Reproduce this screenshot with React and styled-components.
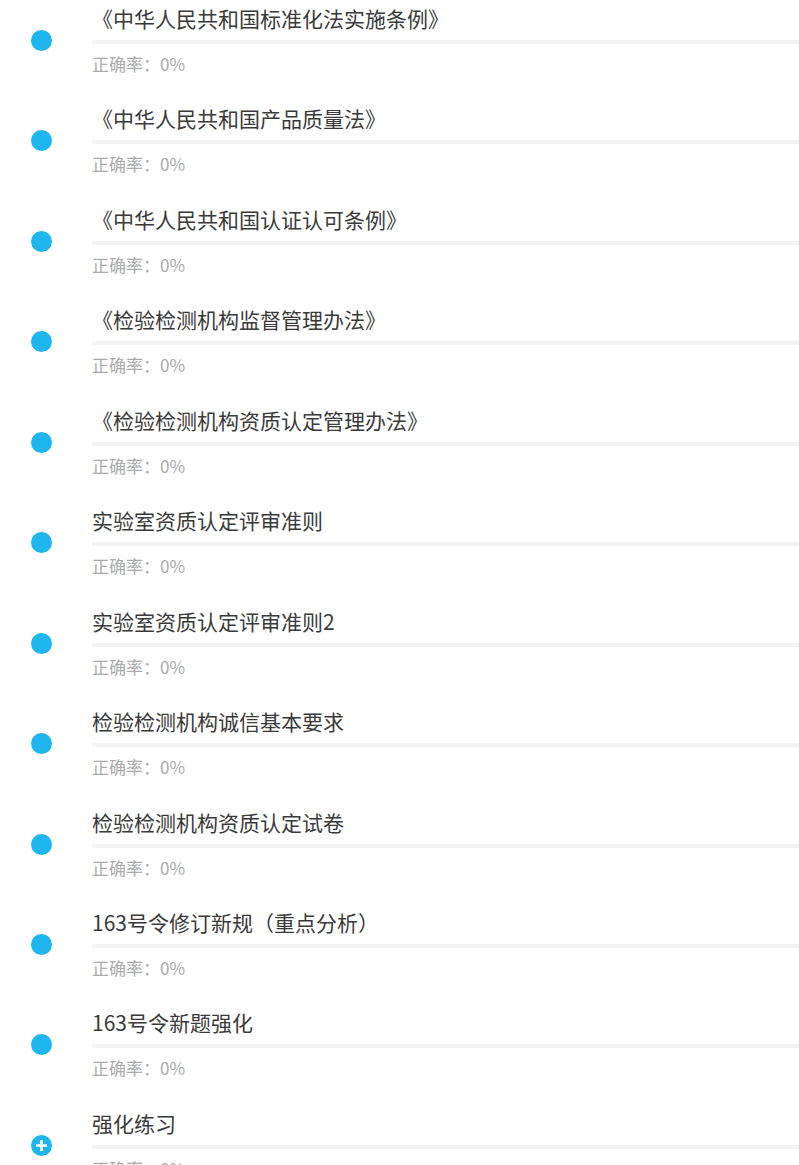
import React from 'react';
import styled, { createGlobalStyle } from 'styled-components';

const GlobalStyle = createGlobalStyle`
  html, body {
    margin: 0;
    padding: 0;
    background: #ffffff;
  }
  body {
    font-family: "Noto Sans CJK SC", "Noto Sans", sans-serif;
  }
`;

const chapters = [
  { title: '《中华人民共和国标准化法实施条例》', rate: '0%' },
  { title: '《中华人民共和国产品质量法》', rate: '0%' },
  { title: '《中华人民共和国认证认可条例》', rate: '0%' },
  { title: '《检验检测机构监督管理办法》', rate: '0%' },
  { title: '《检验检测机构资质认定管理办法》', rate: '0%' },
  { title: '实验室资质认定评审准则', rate: '0%' },
  { title: '实验室资质认定评审准则2', rate: '0%' },
  { title: '检验检测机构诚信基本要求', rate: '0%' },
  { title: '检验检测机构资质认定试卷', rate: '0%' },
  { title: '163号令修订新规（重点分析）', rate: '0%' },
  { title: '163号令新题强化', rate: '0%' },
  { title: '强化练习', rate: '0%', expandable: true },
];

const ChapterItem = ({ title, rate, expandable }) => {
  return (
    <Item>
      <Marker>
        {expandable ? (
          <PlusIcon viewBox="0 0 20 20">
            <circle cx="10" cy="10" r="10" fill="#1fb5ee" />
            <path d="M10 4.8v10.4M4.8 10h10.4" stroke="#fff" strokeWidth="2.6" />
          </PlusIcon>
        ) : (
          <Dot />
        )}
      </Marker>
      <Content>
        <Title>{title}</Title>
        <Track />
        <Rate>正确率：{rate}</Rate>
      </Content>
    </Item>
  );
};

const App = () => {
  return (
    <>
      <GlobalStyle />
      <List>
        {chapters.map((c) => (
          <ChapterItem key={c.title} {...c} />
        ))}
      </List>
    </>
  );
};

const List = styled.div`
  display: flex;
  flex-direction: column;
  width: 799px;
  height: 1165px;
  overflow: hidden;
`;

const Item = styled.div`
  display: flex;
  flex: 0 0 100.45px;
  height: 100.45px;
`;

const Marker = styled.div`
  width: 92px;
  flex: 0 0 92px;
  display: flex;
  justify-content: center;
  align-items: flex-start;
  padding-top: 30px;
  box-sizing: border-box;
  padding-right: 10px;
`;

const Dot = styled.span`
  display: block;
  width: 21px;
  height: 21px;
  border-radius: 50%;
  background: #1fb5ee;
`;

const PlusIcon = styled.svg`
  width: 21px;
  height: 21px;
  display: block;
`;

const Content = styled.div`
  flex: 1;
  display: flex;
  flex-direction: column;
  padding-top: 4px;
`;

const Title = styled.div`
  font-size: 21px;
  line-height: 28px;
  height: 28px;
  color: #3a3a3a;
  white-space: nowrap;
`;

const Track = styled.div`
  height: 4px;
  margin-top: 8px;
  background: #f3f3f3;
`;

const Rate = styled.div`
  margin-top: 9px;
  font-size: 17px;
  line-height: 22px;
  color: #ababab;
`;

export default App;
